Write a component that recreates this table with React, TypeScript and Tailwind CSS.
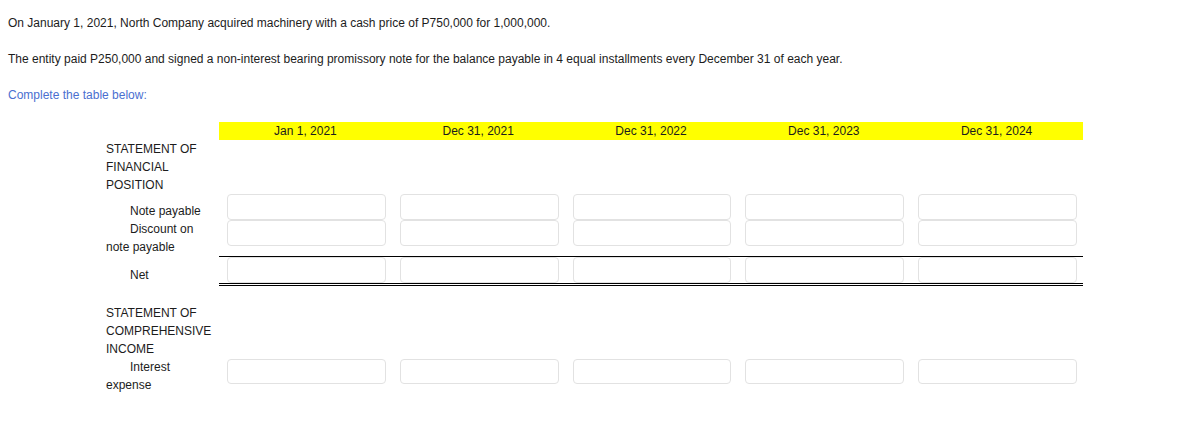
import React from "react";

const cols = ["Jan 1, 2021", "Dec 31, 2021", "Dec 31, 2022", "Dec 31, 2023", "Dec 31, 2024"];

function Box({ h = "h-[26px]" }: { h?: string }) {
  return (
    <div className="pl-[8px] pr-[6px]">
      <div className={`${h} w-full rounded-[4px] border border-[#e2e2e2] bg-white`} />
    </div>
  );
}

function InputRow({ h }: { h?: string }) {
  return (
    <>
      {cols.map((c) => (
        <Box key={c} h={h} />
      ))}
    </>
  );
}

export default function App() {
  return (
    <div
      className="min-h-[428px] w-[1198px] bg-white px-[8px] pt-[14px] text-[12px] leading-[18px] text-[#1c1c1c]"
      style={{ fontFamily: '"Liberation Sans", Arial, sans-serif' }}
    >
      <p>On January 1, 2021, North Company acquired machinery with a cash price of P750,000 for 1,000,000.</p>
      <p className="mt-[18px]">
        The entity paid P250,000 and signed a non-interest bearing promissory note for the balance payable in 4 equal
        installments every December 31 of each year.
      </p>
      <p className="mt-[18px] text-[#4a6fd0]">Complete the table below:</p>

      <div className="ml-[98px] mt-[18px] grid grid-cols-[113px_repeat(5,172.8px)]">
        {/* header */}
        <div className="h-[18px]" />
        {cols.map((c) => (
          <div key={c} className="h-[18px] bg-[#ffff00] text-center leading-[18px]">
            {c}
          </div>
        ))}

        {/* section 1 title */}
        <div className="col-span-6 h-[54px] w-[108px]">STATEMENT OF FINANCIAL POSITION</div>

        {/* note payable */}
        <div className="flex h-[26px] items-end pr-[5px] indent-6">Note payable</div>
        <InputRow />

        {/* discount */}
        <div className="h-[36px] pr-[5px] indent-6">Discount on note payable</div>
        {cols.map((c) => (
          <div key={c} className="h-[36px]">
            <Box />
          </div>
        ))}

        {/* net */}
        <div className="h-[30px] pt-[10px] indent-6">Net</div>
        {cols.map((c) => (
          <div key={c} className="h-[30px] border-t border-b-[3px] border-t-black border-b-black" style={{ borderBottomStyle: "double" }}>
            <Box />
          </div>
        ))}

        {/* spacer */}
        <div className="col-span-6 h-[18px]" />

        {/* section 2 title */}
        <div className="col-span-6 h-[54px] w-[108px]">STATEMENT OF COMPREHENSIVE INCOME</div>

        {/* interest */}
        <div className="h-[36px] pr-[5px] indent-6">Interest expense</div>
        {cols.map((c) => (
          <div key={c} className="h-[36px] pt-[1px]">
            <Box h="h-[25px]" />
          </div>
        ))}
      </div>
    </div>
  );
}
